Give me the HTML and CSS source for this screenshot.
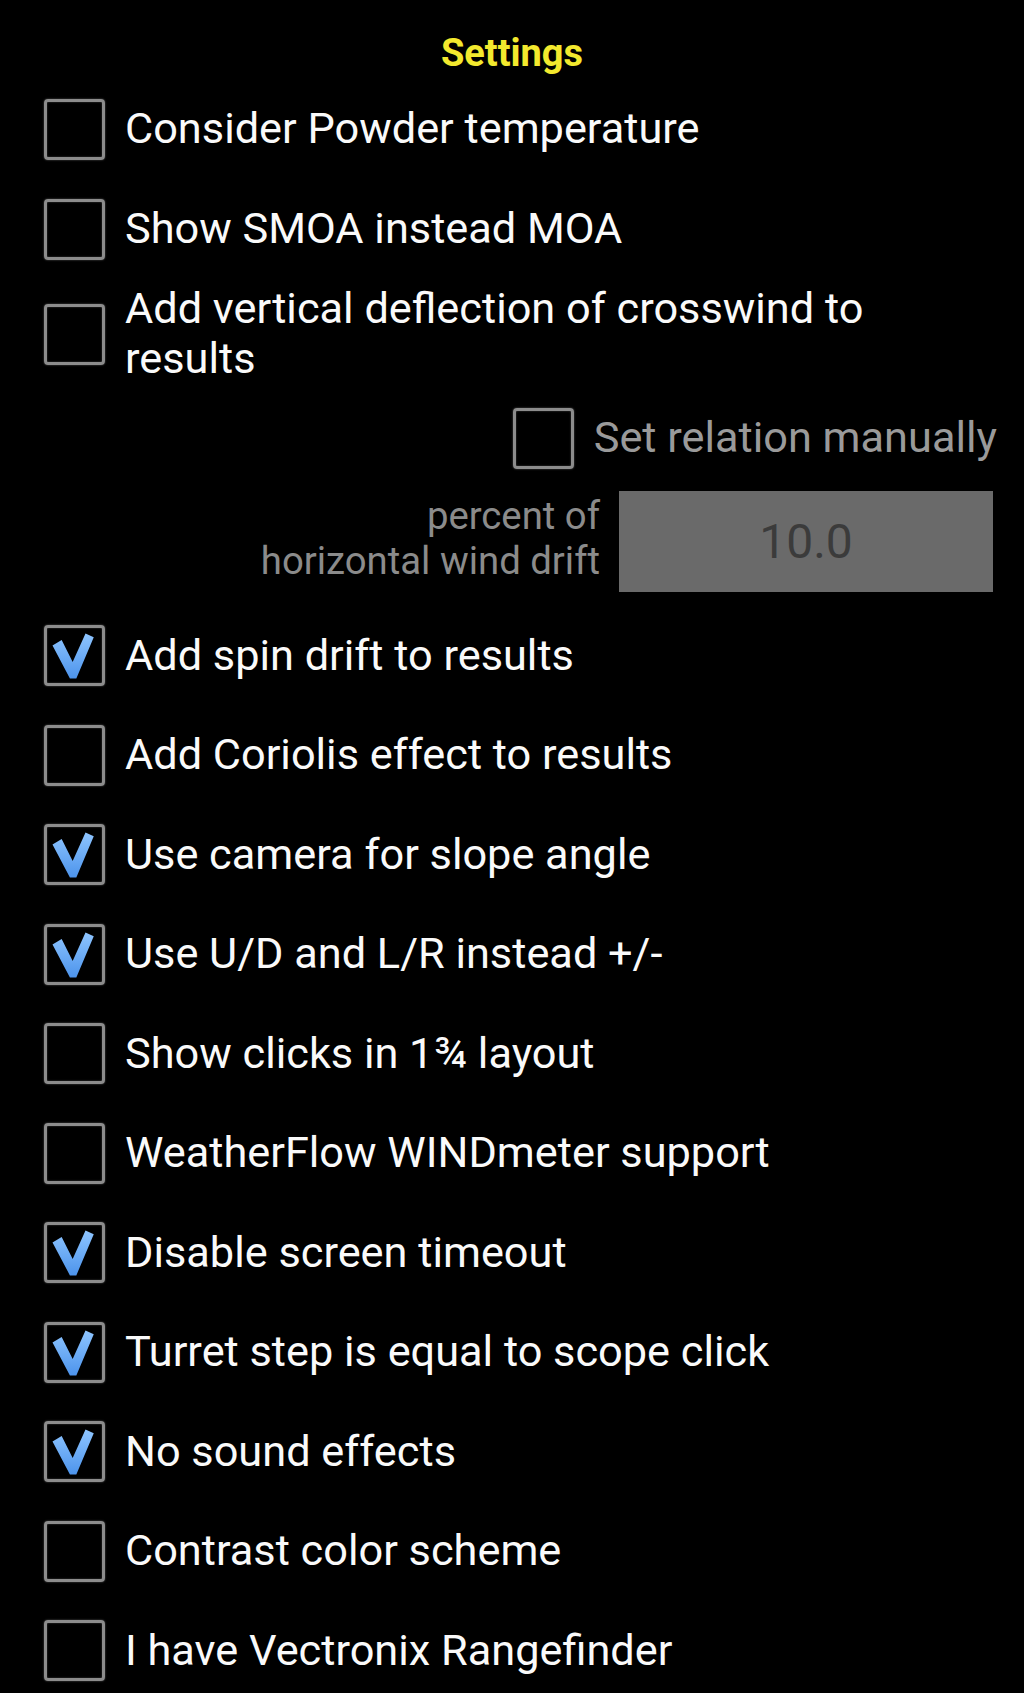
FILE: index.html
```html
<!DOCTYPE html>
<html lang="en">
<head>
<meta charset="utf-8">
<title>Settings</title>
<link rel="stylesheet" href="styles.css">
</head>
<body>
<main class="screen">
  <h1 class="title">Settings</h1>

  <div class="row"><span class="box"></span><span class="label">Consider Powder temperature</span></div>
  <div class="row"><span class="box"></span><span class="label">Show SMOA instead MOA</span></div>
  <div class="row row-tall"><span class="box"></span><span class="label">Add vertical deflection of crosswind to<br>results</span></div>

  <div class="row row-sub"><span class="box"></span><span class="label label-dim">Set relation manually</span></div>
  <div class="row-input">
    <span class="input-label">percent of<br>horizontal wind drift</span>
    <span class="input-box">10.0</span>
  </div>

  <div class="row row-b"><span class="box checked"><svg viewBox="0 0 60 60"><defs><linearGradient id="g" x1="0" y1="0" x2="0" y2="1"><stop offset="0" stop-color="#8ec5ff"/><stop offset="1" stop-color="#4d94ec"/></linearGradient></defs><path d="M6 19 L16 13 L28 37 L42 6 L51 10 L32 55 L25 55 Z" fill="url(#g)"/></svg></span><span class="label">Add spin drift to results</span></div>
  <div class="row row-b"><span class="box"></span><span class="label">Add Coriolis effect to results</span></div>
  <div class="row row-b"><span class="box checked"><svg viewBox="0 0 60 60"><path d="M6 19 L16 13 L28 37 L42 6 L51 10 L32 55 L25 55 Z" fill="url(#g)"/></svg></span><span class="label">Use camera for slope angle</span></div>
  <div class="row row-b"><span class="box checked"><svg viewBox="0 0 60 60"><path d="M6 19 L16 13 L28 37 L42 6 L51 10 L32 55 L25 55 Z" fill="url(#g)"/></svg></span><span class="label">Use U/D and L/R instead +/-</span></div>
  <div class="row row-b"><span class="box"></span><span class="label">Show clicks in 1¾ layout</span></div>
  <div class="row row-b"><span class="box"></span><span class="label">WeatherFlow WINDmeter support</span></div>
  <div class="row row-b"><span class="box checked"><svg viewBox="0 0 60 60"><path d="M6 19 L16 13 L28 37 L42 6 L51 10 L32 55 L25 55 Z" fill="url(#g)"/></svg></span><span class="label">Disable screen timeout</span></div>
  <div class="row row-b"><span class="box checked"><svg viewBox="0 0 60 60"><path d="M6 19 L16 13 L28 37 L42 6 L51 10 L32 55 L25 55 Z" fill="url(#g)"/></svg></span><span class="label">Turret step is equal to scope click</span></div>
  <div class="row row-b"><span class="box checked"><svg viewBox="0 0 60 60"><path d="M6 19 L16 13 L28 37 L42 6 L51 10 L32 55 L25 55 Z" fill="url(#g)"/></svg></span><span class="label">No sound effects</span></div>
  <div class="row row-b"><span class="box"></span><span class="label">Contrast color scheme</span></div>
  <div class="row row-b"><span class="box"></span><span class="label">I have Vectronix Rangefinder</span></div>
</main>
</body>
</html>
```

FILE: styles.css
```css
html, body {
  margin: 0;
  padding: 0;
  background: #000;
}

body {
  font-family: Roboto, "Noto Sans", "Liberation Sans", sans-serif;
  color: #fafafa;
}

.screen {
  width: 1024px;
  min-height: 1693px;
  display: flex;
  flex-direction: column;
}

.title {
  margin: 0;
  padding-top: 27px;
  height: 52px;
  line-height: 52px;
  text-align: center;
  font-size: 38px;
  font-weight: 700;
  color: #f3e92e;
}

.row {
  height: 100px;
  display: flex;
  align-items: center;
  gap: 20px;
  padding-left: 44px;
  box-sizing: border-box;
}

.row-b {
  height: 99.5px;
}

.row-tall {
  height: 109px;
  padding-top: 5px;
  padding-bottom: 4px;
}

.row-sub {
  justify-content: flex-end;
  padding-right: 27px;
  gap: 20px;
}

.box {
  flex: none;
  width: 61px;
  height: 61px;
  box-sizing: border-box;
  border: 3px solid #8c8c8c;
  border-radius: 4px;
  box-shadow: 0 0 2px rgba(210, 210, 210, 0.45), inset 0 0 2px rgba(210, 210, 210, 0.35);
  display: flex;
  align-items: center;
  justify-content: center;
}

.box svg {
  width: 55px;
  height: 55px;
  display: block;
}

.label {
  font-size: 43.3px;
  line-height: 50px;
  color: #fafafa;
}

.label-dim {
  color: #9a9a9a;
}

.row-input {
  display: flex;
  justify-content: flex-end;
  align-items: center;
  gap: 19px;
  padding: 3px 31px 14px 0;
}

.input-label {
  text-align: right;
  font-size: 38.3px;
  line-height: 45px;
  color: #8b8b8b;
  padding-bottom: 7px;
}

.input-box {
  width: 374px;
  height: 101px;
  background: #6a6a6a;
  color: #3b3b3b;
  font-size: 48px;
  display: flex;
  align-items: center;
  justify-content: center;
}
```
